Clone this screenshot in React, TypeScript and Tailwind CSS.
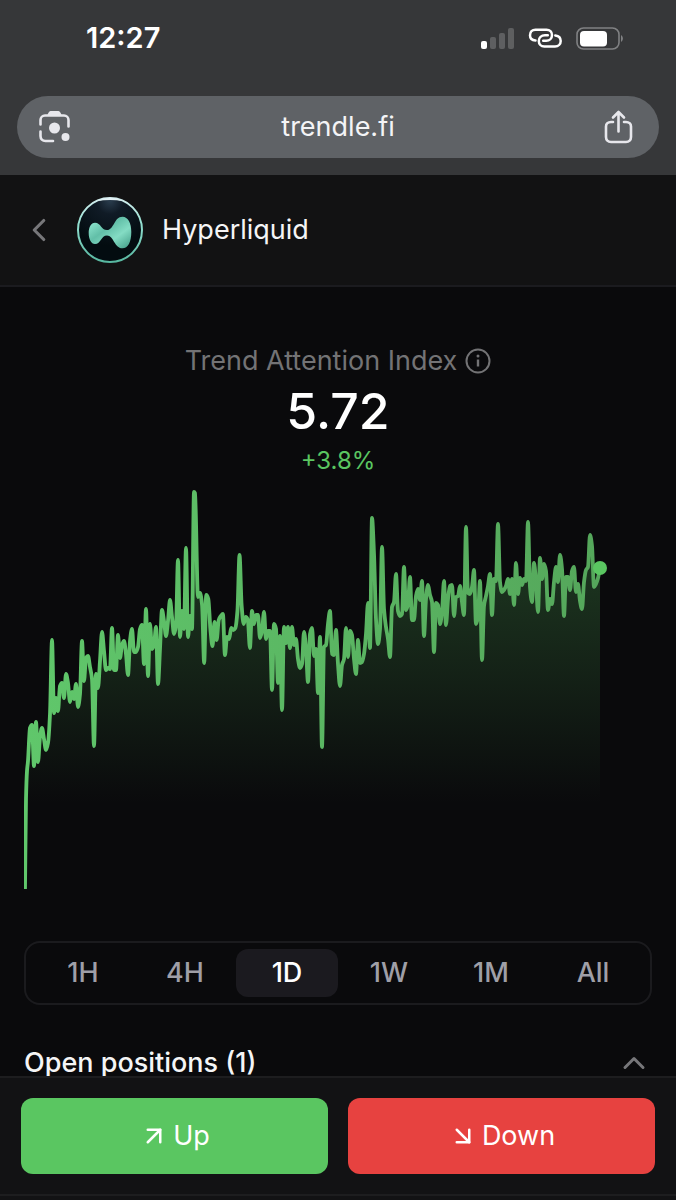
import { useState } from "react"
import { FiArrowDownRight, FiArrowUpRight, FiChevronLeft, FiChevronUp } from "react-icons/fi"

type Point = [number, number]

const ranges = ["1H", "4H", "1D", "1W", "1M", "All"]

const points: Point[] = [
  [25, 890], [26, 800], [27, 772], [28, 762], [30, 729], [32, 726], [34, 767], [36, 723], [38, 763], [40, 738],
  [42, 729], [44, 740], [46, 751], [48, 744], [50, 715], [52, 641], [54, 714], [56, 699], [58, 712], [60, 687],
  [62, 684], [64, 699], [66, 675], [68, 684], [70, 703], [72, 693], [74, 700], [76, 685], [78, 708], [80, 695],
  [82, 642], [84, 682], [86, 659], [88, 657], [90, 668], [92, 680], [94, 747], [96, 675], [98, 689], [100, 662],
  [102, 633], [104, 652], [106, 671], [108, 669], [110, 670], [112, 629], [114, 671], [116, 671], [118, 636], [120, 659],
  [122, 646], [124, 642], [126, 655], [128, 676], [130, 642], [132, 630], [134, 653], [136, 653], [138, 648], [140, 630],
  [142, 626], [144, 665], [146, 610], [148, 677], [150, 625], [152, 650], [154, 646], [156, 628], [158, 685], [160, 650],
  [162, 611], [164, 622], [166, 637], [168, 622], [170, 601], [172, 618], [174, 635], [176, 627], [178, 561], [180, 638],
  [182, 612], [184, 630], [186, 549], [188, 638], [190, 617], [192, 630], [194, 493], [195, 494], [198, 598], [200, 594],
  [202, 606], [204, 664], [206, 596], [208, 600], [210, 630], [212, 647], [214, 623], [216, 641], [218, 621], [220, 617],
  [222, 615], [224, 656], [226, 638], [228, 640], [230, 629], [232, 631], [234, 629], [236, 612], [238, 556], [240, 606],
  [242, 625], [244, 618], [246, 621], [248, 649], [250, 612], [252, 625], [254, 616], [256, 616], [258, 639], [260, 632],
  [262, 613], [264, 640], [266, 632], [268, 632], [270, 691], [272, 625], [274, 630], [276, 684], [278, 637], [280, 711],
  [282, 628], [284, 644], [286, 628], [288, 649], [290, 628], [292, 646], [294, 640], [296, 660], [298, 669], [300, 665],
  [302, 633], [304, 650], [306, 683], [308, 635], [310, 629], [312, 657], [314, 650], [316, 694], [318, 638], [320, 748],
  [322, 648], [324, 646], [326, 625], [328, 612], [330, 655], [332, 656], [334, 631], [336, 665], [338, 687], [340, 666],
  [342, 660], [344, 629], [346, 658], [348, 632], [350, 636], [352, 660], [354, 675], [356, 641], [358, 664], [360, 663],
  [362, 655], [364, 635], [366, 604], [368, 649], [370, 519], [372, 555], [374, 620], [376, 645], [378, 630], [380, 548],
  [382, 610], [384, 628], [386, 640], [388, 658], [390, 608], [392, 603], [394, 575], [396, 612], [398, 617], [400, 615],
  [402, 568], [404, 611], [406, 605], [408, 578], [410, 621], [412, 621], [414, 597], [416, 590], [418, 601], [420, 582],
  [422, 637], [424, 600], [426, 586], [428, 596], [430, 603], [432, 653], [434, 604], [436, 606], [438, 625], [440, 613],
  [442, 582], [444, 626], [446, 600], [448, 587], [450, 586], [452, 617], [454, 598], [456, 597], [458, 587], [460, 603],
  [462, 616], [464, 528], [466, 594], [468, 595], [470, 588], [472, 571], [474, 625], [476, 618], [478, 582], [480, 661],
  [482, 607], [484, 597], [486, 587], [488, 575], [490, 616], [492, 580], [494, 582], [496, 525], [498, 583], [500, 593],
  [502, 591], [504, 587], [506, 580], [508, 595], [510, 580], [512, 606], [514, 564], [516, 595], [518, 579], [520, 586],
  [522, 580], [524, 582], [526, 523], [528, 588], [530, 603], [532, 564], [534, 583], [536, 613], [538, 559], [540, 580],
  [542, 565], [544, 572], [546, 611], [548, 600], [550, 605], [552, 583], [554, 568], [556, 583], [558, 556], [560, 570],
  [562, 617], [564, 578], [566, 578], [568, 591], [570, 572], [572, 568], [574, 593], [576, 585], [578, 602], [580, 610],
  [582, 583], [584, 571], [586, 568], [588, 536], [590, 547], [592, 588], [594, 585], [596, 579], [598, 568],
].map(([x, y]) => [x > 200 ? x + Math.min(2, (x - 200) / 25) : x, y] as Point)

// monotone cubic interpolation, so peaks never overshoot their sample
const buildLine = (pts: Point[]) => {
  const slope = (i: number) => (pts[i + 1][1] - pts[i][1]) / (pts[i + 1][0] - pts[i][0])
  const tangents = pts.map((_, i) => {
    if (i === 0) return slope(0)
    if (i === pts.length - 1) return slope(i - 1)
    const a = slope(i - 1)
    const b = slope(i)
    return a * b <= 0 ? 0 : (2 * a * b) / (a + b)
  })
  let d = `M${pts[0][0]},${pts[0][1]}`
  for (let i = 0; i < pts.length - 1; i++) {
    const [x0, y0] = pts[i]
    const [x1, y1] = pts[i + 1]
    const h = (x1 - x0) / 3
    d += `C${x0 + h},${y0 + h * tangents[i]} ${x1 - h},${y1 - h * tangents[i + 1]} ${x1},${y1}`
  }
  return d
}

const line = buildLine(points)

const StatusBar = () => (
  <div className="flex h-24 items-start justify-between pl-[86px] pr-[53px] pt-5 text-white">
    <span className="text-[29px]/[36px] font-semibold">12:27</span>
    <div className="flex h-9 items-center gap-3">
      <svg width="36" height="24" viewBox="0 0 36 24" fill="currentColor" aria-label="Signal">
        <rect x="1" y="15" width="6" height="8" rx="2" />
        <g opacity="0.2">
          <rect x="10" y="11" width="6" height="12" rx="2" />
          <rect x="19" y="7" width="6" height="16" rx="2" />
          <rect x="28" y="2" width="6" height="21" rx="2" />
        </g>
      </svg>
      <svg width="35" height="24" viewBox="0 -1 35 24" fill="none" stroke="currentColor" strokeWidth="2.5" strokeLinecap="round" aria-label="Hotspot">
        <path d="M7.5 13.4C4 13.2 2 11 2 8.2C2 5 4.2 2.7 7.5 2.7H18.5C21.8 2.7 24 5 24 8C24 11.4 21.6 13.8 18.2 13.8H15.2" />
        <path d="M19.8 8.2H17C13.3 8.2 10.8 10.6 10.8 14C10.8 17.3 13 19.5 16.3 19.5H27C30.4 19.5 32.7 17.2 32.7 14C32.7 11 30.6 8.8 27.3 8.4" />
      </svg>
      <svg width="48" height="24" viewBox="0 0 48 24" fill="none" aria-label="Battery">
        <rect x="2" y="2" width="42" height="21" rx="6.5" stroke="#808183" strokeWidth="1.6" />
        <rect x="5" y="5" width="27" height="15.5" rx="4" fill="#fff" />
        <path d="M46 9C48.5 10.5 48.5 14.5 46 16Z" fill="#808183" />
      </svg>
    </div>
  </div>
)

const AddressBar = () => (
  <div className="mx-[17px] flex h-[62px] items-center justify-between rounded-full bg-[#5f6266] px-5 text-[#e7e7ec]">
    <button type="button" aria-label="Search with camera">
      <svg width="36" height="36" viewBox="0 0 36 36" fill="none" stroke="currentColor" strokeWidth="2.6" strokeLinecap="round">
        <path d="M3.5 15.5V11C3.5 8.5 5.5 6.5 8 6.5H27C29.5 6.5 31.500 8.5 31.500 11V17.5" />
        <path d="M3.5 22.5V27C3.5 30 5.5 32 8.5 32H16" />
        <path d="M10 7C11.5 3 12.5 2 14 2H21C22.5 2 23.5 3 25 7Z" fill="currentColor" stroke="none" />
        <circle cx="17.5" cy="19" r="5.5" fill="currentColor" stroke="none" />
        <circle cx="28.5" cy="28" r="4" fill="currentColor" stroke="none" />
      </svg>
    </button>
    <span className="text-[27px]/[36px] text-[#f4f4f6]">trendle.fi</span>
    <button type="button" aria-label="Share" className="pr-1">
      <svg width="32" height="36" viewBox="0 0 32 36" fill="none" stroke="currentColor" strokeWidth="2.6" strokeLinecap="round" strokeLinejoin="round">
        <path d="M10 13H8C5 13 3 15 3 17.5V28C3 31 5 33 8 33H23C26 33 28 31 28 28V17.5C28 15 26 13 23 13H21" />
        <path d="M15.500 22.5V3.5M10 8.500L15.500 3L21 8.500" />
      </svg>
    </button>
  </div>
)

const TokenLogo = () => (
  <svg width="68" height="68" viewBox="0 0 68 68" aria-hidden="true">
    <defs>
      <radialGradient id="disc" cx="0.5" cy="0.04" r="0.7">
        <stop offset="0" stopColor="#2a3d4e" />
        <stop offset="0.3" stopColor="#101b26" />
        <stop offset="1" stopColor="#030c10" />
      </radialGradient>
      <linearGradient id="ring" x1="0" y1="0" x2="0" y2="1">
        <stop offset="0" stopColor="#d5eef0" />
        <stop offset="0.4" stopColor="#93dfd0" />
        <stop offset="1" stopColor="#57b7a0" />
      </linearGradient>
      <linearGradient id="blob" x1="0" y1="0" x2="1" y2="1">
        <stop offset="0" stopColor="#9df3dc" />
        <stop offset="0.4" stopColor="#62bfa8" />
        <stop offset="0.65" stopColor="#84dcc4" />
        <stop offset="1" stopColor="#3e9984" />
      </linearGradient>
    </defs>
    <circle cx="34" cy="34" r="32" fill="url(#disc)" stroke="url(#ring)" strokeWidth="2" />
    <path d="M21 5Q34 -1 47 5Q34 3 21 5Z" fill="#e2f0f4" />
    <path d="M12.7 37C12.7 31 15 26.7 19 26.7C25 26.700 25 34 31 34C38 34 38 20.7 46.500 20.7C52 20.7 55.3 27 55.3 36C55.3 46 52 52.3 46.5 52.3C38 52.3 38 39.5 31 39.5C25 39.5 25 48 19 48C15 48 12.7 43 12.7 37Z" fill="url(#blob)" />
  </svg>
)

const TokenHeader = () => (
  <header className="flex h-28 items-center border-b-2 border-[#1b1b1f] bg-[#121213] pl-5">
    <button type="button" aria-label="Back" className="text-[#77777a]">
      <FiChevronLeft size={38} strokeWidth={2} />
    </button>
    <div className="ml-[18px] flex items-center gap-[18px]">
      <TokenLogo />
      <h1 className="text-[27px]/[36px] text-[#f5f5f6]">Hyperliquid</h1>
    </div>
  </header>
)

const Chart = () => (
  <svg viewBox="24 490 628 404" className="mt-3 block h-auto w-full" role="img" aria-label="Trend Attention Index chart">
    <defs>
      <linearGradient id="area" gradientUnits="userSpaceOnUse" x1="0" y1="493" x2="0" y2="805">
        <stop offset="0" stopColor="#5ac661" stopOpacity="0.3" />
        <stop offset="1" stopColor="#5ac661" stopOpacity="0" />
      </linearGradient>
      <linearGradient id="stroke" gradientUnits="userSpaceOnUse" x1="25" y1="0" x2="600" y2="0">
        <stop offset="0" stopColor="#60c76b" />
        <stop offset="1" stopColor="#55a75b" />
      </linearGradient>
    </defs>
    <path d={`${line}V891H25Z`} fill="url(#area)" />
    <path d={line} fill="none" stroke="url(#stroke)" strokeWidth="3.8" strokeLinejoin="round" />
    <circle cx="600" cy="569" r="7" fill="#5ac661" />
  </svg>
)

const App = () => {
  const [range, setRange] = useState("1D")

  return (
    <div className="min-h-screen bg-[#0a0a0c] font-['Inter','Liberation_Sans',sans-serif]">
      <div className="bg-[#363739] pb-[17px]">
        <StatusBar />
        <AddressBar />
      </div>
      <TokenHeader />
      <main className="px-6 pt-14">
        <section className="flex flex-col items-center">
          <div className="flex items-center gap-2 text-[#737375]">
            <h2 className="text-[27px]/[36px]">Trend Attention Index</h2>
            <button type="button" aria-label="About this index">
              <svg width="26" height="26" viewBox="0 0 26 26" fill="none" stroke="currentColor" strokeWidth="2">
                <circle cx="13" cy="13" r="11.5" />
                <path d="M13 11.5V18.5" strokeWidth="2.4" />
                <circle cx="13" cy="8" r="1.5" fill="currentColor" stroke="none" />
              </svg>
            </button>
          </div>
          <p className="mt-0.5 text-[50px]/[60px] font-medium text-white">5.72</p>
          <p className="mt-1 text-[24px]/[32px] text-[#5ac661]">+3.8%</p>
          <Chart />
        </section>

        <div className="mt-12 flex rounded-2xl border-2 border-[#1b1b1e] p-1.5">
          {ranges.map((item) => (
            <button
              key={item}
              type="button"
              aria-pressed={item === range}
              onClick={() => setRange(item)}
              className={`h-12 flex-1 rounded-xl text-[27px]/[36px] font-medium ${
                item === range ? "bg-[#1b1a1f] text-white" : "text-[#9f9fa7]"
              }`}
            >
              {item}
            </button>
          ))}
        </div>

        <button type="button" className="mt-10 flex w-full items-center justify-between">
          <span className="text-[27px]/[36px] font-medium text-[#f5f5f6]">Open positions (1)</span>
          <FiChevronUp size={36} className="text-[#77777a]" />
        </button>
      </main>

      <footer className="fixed inset-x-0 bottom-0 border-t-2 border-[#1d1d1f] bg-[#121214]">
        <div className="flex gap-5 px-[21px] py-5 text-[27px]/[36px] text-white">
          <button type="button" className="flex h-[76px] flex-1 items-center justify-center gap-1 rounded-xl bg-[#5ac661]">
            <FiArrowUpRight size={30} />
            Up
          </button>
          <button type="button" className="flex h-[76px] flex-1 items-center justify-center gap-1 rounded-xl bg-[#e74240]">
            <FiArrowDownRight size={30} />
            Down
          </button>
        </div>
        <div className="h-1.5 border-t-2 border-[#1d1d1f]" />
      </footer>
    </div>
  )
}

export default App
